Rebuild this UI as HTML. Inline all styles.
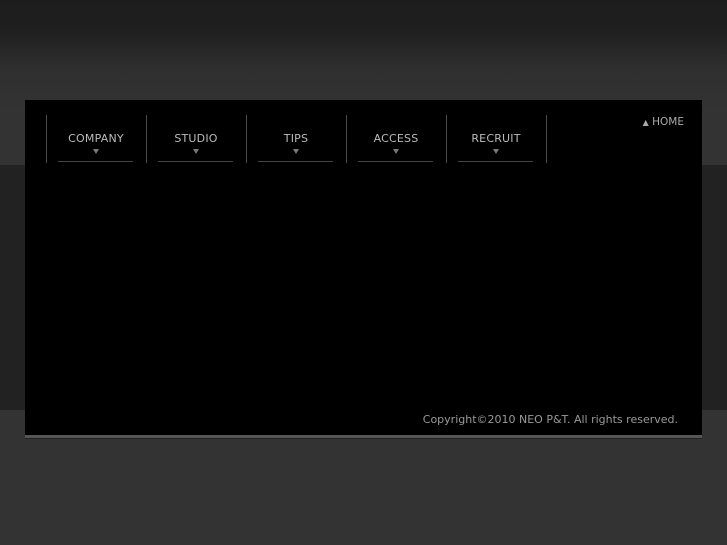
<!DOCTYPE html>
<html><head><style>
body{margin:0;width:727px;height:545px;overflow:hidden;position:relative;font-family:"DejaVu Sans","Liberation Sans",sans-serif;
background:linear-gradient(#1d1d1d 0px,#1f1f1f 30px,#2f2f2f 70px,#333 110px,#333 165px,#222 165px,#222 410px,#333 410px);}
#box{position:absolute;left:25px;top:100px;width:677px;height:335px;background:#000;border-bottom:3px solid #555;box-shadow:0 1px 0 #222;}
.d{position:absolute;top:15px;width:1px;height:48px;background:#4a4a4a;}
.it{position:absolute;top:15px;width:100px;height:48px;text-align:center;color:#bbb;font-size:11px;letter-spacing:0.2px;}
.it .t{position:absolute;top:17px;left:0;width:100%;}
.it .a{position:absolute;top:34px;left:47px;width:0;height:0;border-left:3px solid transparent;border-right:3px solid transparent;border-top:5px solid #777;}
.it .u{position:absolute;top:46px;left:12px;width:75px;height:1px;background:#444;}
#home{position:absolute;right:18px;top:16px;color:#aaa;font-size:10.5px;}
#copy{position:absolute;right:24px;top:313px;color:#999;font-size:11px;letter-spacing:0;}
</style></head><body>
<div id="box">
<div class="d" style="left:21px"></div><div class="d" style="left:121px"></div><div class="d" style="left:221px"></div><div class="d" style="left:321px"></div><div class="d" style="left:421px"></div><div class="d" style="left:521px"></div>
<div class="it" style="left:21px"><div class="t">COMPANY</div><div class="a"></div><div class="u"></div></div>
<div class="it" style="left:121px"><div class="t">STUDIO</div><div class="a"></div><div class="u"></div></div>
<div class="it" style="left:221px"><div class="t">TIPS</div><div class="a"></div><div class="u"></div></div>
<div class="it" style="left:321px"><div class="t">ACCESS</div><div class="a"></div><div class="u"></div></div>
<div class="it" style="left:421px"><div class="t">RECRUIT</div><div class="a"></div><div class="u"></div></div>
<div id="home"><span style="font-size:8px">▲</span> HOME</div>
<div id="copy">Copyright©2010 NEO P&amp;T. All rights reserved.</div>
</div>
</body></html>
